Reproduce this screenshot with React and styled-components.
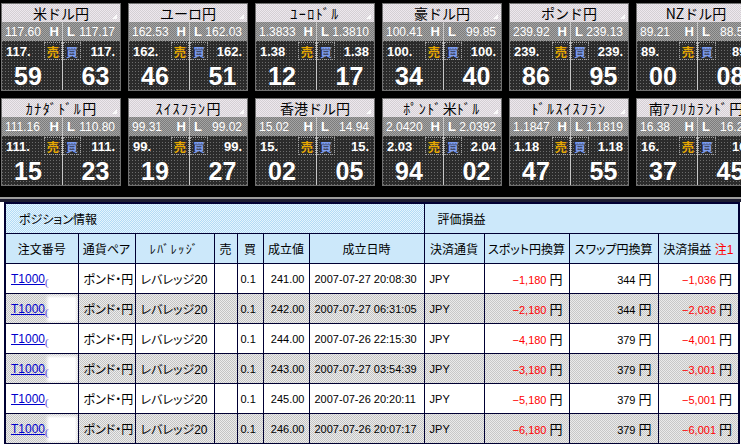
import styled, { createGlobalStyle } from 'styled-components';

const GlobalStyle = createGlobalStyle`
  html, body {
    margin: 0;
    background: #fff;
    overflow: hidden;
  }
  body {
    font-family: "Liberation Sans", "Noto Sans CJK JP", sans-serif;
  }
`;

const rows = [
  [
    { name: '米ドル円', high: '117.60', low: '117.17', bidHead: '117.', askHead: '117.', bid: '59', ask: '63' },
    { name: 'ユーロ円', high: '162.53', low: '162.03', bidHead: '162.', askHead: '162.', bid: '46', ask: '51' },
    { name: 'ﾕｰﾛﾄﾞﾙ', high: '1.3833', low: '1.3810', bidHead: '1.38', askHead: '1.38', bid: '12', ask: '17' },
    { name: '豪ドル円', high: '100.41', low: '99.85', bidHead: '100.', askHead: '100.', bid: '34', ask: '40' },
    { name: 'ポンド円', high: '239.92', low: '239.13', bidHead: '239.', askHead: '239.', bid: '86', ask: '95' },
    { name: 'NZドル円', high: '89.21', low: '88.53', bidHead: '89.', askHead: '89.', bid: '00', ask: '08' },
  ],
  [
    { name: 'ｶﾅﾀﾞﾄﾞﾙ円', high: '111.16', low: '110.80', bidHead: '111.', askHead: '111.', bid: '15', ask: '23' },
    { name: 'ｽｲｽﾌﾗﾝ円', high: '99.31', low: '99.02', bidHead: '99.', askHead: '99.', bid: '19', ask: '27' },
    { name: '香港ドル円', high: '15.02', low: '14.94', bidHead: '15.', askHead: '15.', bid: '02', ask: '05' },
    { name: 'ﾎﾟﾝﾄﾞ米ﾄﾞﾙ', high: '2.0420', low: '2.0392', bidHead: '2.03', askHead: '2.04', bid: '94', ask: '02' },
    { name: 'ﾄﾞﾙｽｲｽﾌﾗﾝ', high: '1.1847', low: '1.1819', bidHead: '1.18', askHead: '1.18', bid: '47', ask: '55' },
    { name: '南ｱﾌﾘｶﾗﾝﾄﾞ円', high: '16.38', low: '16.29', bidHead: '16.', askHead: '16.', bid: '37', ask: '45' },
  ],
];

const positions = [
  { rate: '241.00', date: '2007-07-27 20:08:30', spot: '−1,180', swap: '344', pl: '−1,036' },
  { rate: '242.00', date: '2007-07-27 06:31:05', spot: '−2,180', swap: '344', pl: '−2,036' },
  { rate: '244.00', date: '2007-07-26 22:15:30', spot: '−4,180', swap: '379', pl: '−4,001' },
  { rate: '243.00', date: '2007-07-27 03:54:39', spot: '−3,180', swap: '379', pl: '−3,001' },
  { rate: '245.00', date: '2007-07-26 20:20:11', spot: '−5,180', swap: '379', pl: '−5,001' },
  { rate: '246.00', date: '2007-07-26 20:07:17', spot: '−6,180', swap: '379', pl: '−6,001' },
];

// half-width katakana is drawn wider in the old bitmap font, so space those runs out
const splitHalf = (text) =>
  text.split(/([\uFF61-\uFF9F]+)/).map((part, i) =>
    /[\uFF61-\uFF9F]/.test(part) ? <Half key={i}>{part}</Half> : part
  );

const QuoteCard = ({ q }) => (
  <Card>
    <TitleBar>{splitHalf(q.name)}</TitleBar>
    <HLRow>
      <HLHalf>
        <span>{q.high}</span>
        <b>H</b>
      </HLHalf>
      <HLHalf $right>
        <b>L</b>
        <span>{q.low}</span>
      </HLHalf>
    </HLRow>
    <PriceArea>
      <PriceHalf>
        <PriceTop>
          <SmallPrice>{q.bidHead}</SmallPrice>
          <SideBox $color="#e8a800">売</SideBox>
        </PriceTop>
        <BigDigits $shift={-4}>{q.bid}</BigDigits>
      </PriceHalf>
      <PriceHalf $right>
        <PriceTop>
          <SideBox $color="#7c9cf0">買</SideBox>
          <SmallPrice>{q.askHead}</SmallPrice>
        </PriceTop>
        <BigDigits $shift={4}>{q.ask}</BigDigits>
      </PriceHalf>
    </PriceArea>
  </Card>
);

const Yen = ({ value, red }) => (
  <>
    <Amount $red={red}>{value}</Amount> <YenMark>円</YenMark>
  </>
);

export default function App() {
  return (
    <>
      <GlobalStyle />
      <Board>
        {rows.map((row, i) => (
          <BoardRow key={i}>
            {row.map((q) => (
              <QuoteCard key={q.name} q={q} />
            ))}
          </BoardRow>
        ))}
      </Board>
      <Separator />
      <TableWrap>
        <Table>
          <colgroup>
            {[73, 57, 79, 23, 26, 46, 115, 60, 85, 89, 81].map((w, i) => (
              <col key={i} style={{ width: w }} />
            ))}
          </colgroup>
          <thead>
            <tr>
              <GroupHead colSpan={7}>ポジション情報</GroupHead>
              <GroupHead colSpan={4}>評価損益</GroupHead>
            </tr>
            <tr>
              <ColHead>注文番号</ColHead>
              <ColHead>通貨ペア</ColHead>
              <ColHead>{splitHalf('ﾚﾊﾞﾚｯｼﾞ')}</ColHead>
              <ColHead>売</ColHead>
              <ColHead>買</ColHead>
              <ColHead>成立値</ColHead>
              <ColHead>成立日時</ColHead>
              <ColHead>決済通貨</ColHead>
              <ColHead>スポット円換算</ColHead>
              <ColHead>スワップ円換算</ColHead>
              <ColHead>
                決済損益 <Note>注1</Note>
              </ColHead>
            </tr>
          </thead>
          <tbody>
            {positions.map((p, i) => (
              <DataRow key={i} $shaded={i % 2 === 1}>
                <Cell>
                  <OrderLink href="#">
                    T1000<Clip>0</Clip>
                  </OrderLink>
                  <Redact />
                </Cell>
                <Cell $jp>ポンド・円</Cell>
                <Cell $jp>レバレッジ20</Cell>
                <Cell />
                <Cell $pad={3}>0.1</Cell>
                <Cell $align="right">{p.rate}</Cell>
                <Cell>{p.date}</Cell>
                <Cell>JPY</Cell>
                <Cell $align="right" $pad={6}>
                  <Yen value={p.spot} red />
                </Cell>
                <Cell $align="right" $pad={6}>
                  <Yen value={p.swap} />
                </Cell>
                <Cell $align="right" $pad={6}>
                  <Yen value={p.pl} red />
                </Cell>
              </DataRow>
            ))}
          </tbody>
        </Table>
      </TableWrap>
    </>
  );
}

const Board = styled.div`
  box-sizing: border-box;
  height: 196px;
  padding: 3px 0 0 1px;
  background: #000;
  display: flex;
  flex-direction: column;
  gap: 7px;
  overflow: hidden;
`;

const BoardRow = styled.div`
  display: flex;
  gap: 7px;
`;

const Card = styled.div`
  flex: none;
  box-sizing: border-box;
  width: 120px;
  height: 88px;
  border: 1px solid #707070;
  display: flex;
  flex-direction: column;
  overflow: hidden;
`;

const Half = styled.span`
  letter-spacing: 1.5px;
`;

const TitleBar = styled.div`
  position: relative;
  height: 18px;
  line-height: 18px;
  text-align: center;
  font-family: "Noto Sans CJK JP", sans-serif;
  font-size: 14px;
  color: #000;
  white-space: nowrap;
  background: repeating-conic-gradient(#d4d0d4 0 25%, #eee8ee 0 50%) 0 0 / 2px 2px;
  &::after {
    content: '';
    position: absolute;
    right: 3px;
    bottom: 3px;
    border-left: 5px solid transparent;
    border-bottom: 5px solid #fafafa;
  }
`;

const HLRow = styled.div`
  height: 19px;
  display: grid;
  grid-template-columns: 60px 1fr;
  background: repeating-conic-gradient(#7c7c7c 0 25%, #a4a4a4 0 50%) 0 0 / 2px 2px;
  color: #fff;
  font-size: 12px;
`;

const HLHalf = styled.div`
  display: flex;
  align-items: center;
  justify-content: space-between;
  padding: ${(p) => (p.$right ? '0 5px 0 4px' : '0 3px 0 3px')};
  border-left: ${(p) => (p.$right ? '1px solid #c8c8c8' : 'none')};
  white-space: nowrap;
  b {
    font-weight: 700;
    font-size: 13px;
  }
`;

const PriceArea = styled.div`
  flex: 1;
  display: grid;
  grid-template-columns: 60px 1fr;
  background: conic-gradient(from 270deg at 1px 1px, #6c6c6c 0 90deg, #2b2b2b 90deg) 0 0 / 3px 3px;
  color: #fff;
`;

const PriceHalf = styled.div`
  display: flex;
  flex-direction: column;
  border-left: ${(p) => (p.$right ? '1px solid #c8c8c8' : 'none')};
`;

const PriceTop = styled.div`
  display: flex;
  justify-content: space-between;
  align-items: flex-start;
  height: 19px;
  padding-top: 1px;
`;

const SmallPrice = styled.span`
  font-size: 13px;
  font-weight: 700;
  line-height: 15px;
  padding: 2px 5px 0 4px;
`;

const SideBox = styled.span`
  box-sizing: border-box;
  width: 18px;
  height: 18px;
  border: 1px dotted #a0a0a0;
  display: flex;
  align-items: center;
  justify-content: center;
  font-family: "Noto Sans CJK JP", sans-serif;
  font-size: 12px;
  font-weight: 700;
  color: ${(p) => p.$color};
`;

const BigDigits = styled.div`
  font-size: 25px;
  font-weight: 700;
  line-height: 28px;
  margin-top: 1px;
  text-align: center;
  padding-left: ${(p) => (p.$shift > 0 ? p.$shift * 2 : 0)}px;
  padding-right: ${(p) => (p.$shift < 0 ? -p.$shift * 2 : 0)}px;
`;

const Separator = styled.div`
  height: 6px;
  background: linear-gradient(#000 0 1px, #9c9c9c 1px 3px, #1c1c30 3px 6px);
`;

const TableWrap = styled.div`
  padding-left: 4px;
`;

const Table = styled.table`
  border-collapse: collapse;
  table-layout: fixed;
  width: 735px;
  border: 2px solid #000033;
  font-family: "Liberation Sans", "Noto Sans CJK JP", sans-serif;
  font-size: 11px;
  font-feature-settings: "palt";
  color: #000;
`;

const blueDither = 'repeating-conic-gradient(#b2dbf6 0 25%, #e6f5fd 0 50%) 0 0 / 2px 2px';

const GroupHead = styled.th`
  height: 29px;
  padding: 0 0 0 13px;
  text-align: left;
  font-size: 12px;
  font-weight: 400;
  border: 1px solid #000033;
  background: ${blueDither};
`;

const ColHead = styled.th`
  height: 29px;
  padding: 0;
  text-align: center;
  font-size: 12px;
  font-weight: 400;
  white-space: nowrap;
  border: 1px solid #000033;
  background: ${blueDither};
`;

const Note = styled.span`
  color: #ff0000;
`;

const DataRow = styled.tr`
  background: ${(p) =>
    p.$shaded ? 'repeating-conic-gradient(#c4c4c4 0 25%, #ececec 0 50%) 0 0 / 2px 2px' : '#fff'};
`;

const Cell = styled.td`
  height: 29px;
  padding: 0 ${(p) => (p.$align === 'right' ? p.$pad || 4 : 0)}px 0
    ${(p) => (p.$align === 'right' ? 0 : p.$pad || 5)}px;
  text-align: ${(p) => p.$align || 'left'};
  font-size: ${(p) => (p.$jp ? 12 : 11)}px;
  white-space: nowrap;
  overflow: hidden;
  border: 1px solid #000033;
`;

const OrderLink = styled.a`
  color: #0000cc;
  text-decoration: underline;
  font-size: 12px;
  vertical-align: middle;
`;

const Clip = styled.span`
  display: inline-block;
  width: 4px;
  overflow: hidden;
  vertical-align: bottom;
`;

const Redact = styled.span`
  display: inline-block;
  width: 26px;
  height: 22px;
  vertical-align: middle;
  background: #fff;
  box-shadow: 0 0 3px 2px #fff;
`;

const Amount = styled.span`
  color: ${(p) => (p.$red ? '#ff0000' : '#000')};
`;

const YenMark = styled.span`
  font-size: 13px;
`;
